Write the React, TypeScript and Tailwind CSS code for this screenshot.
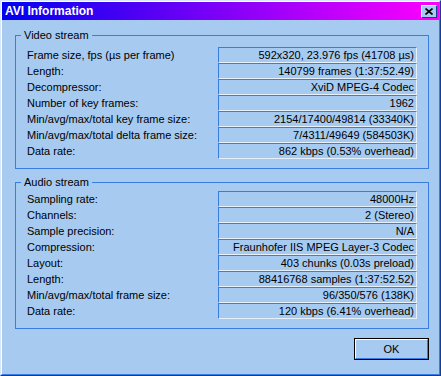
import React from "react";

type Row = [string, string];

const video: Row[] = [
  ["Frame size, fps (µs per frame)", "592x320, 23.976 fps (41708 µs)"],
  ["Length:", "140799 frames (1:37:52.49)"],
  ["Decompressor:", "XviD MPEG-4 Codec"],
  ["Number of key frames:", "1962"],
  ["Min/avg/max/total key frame size:", "2154/17400/49814 (33340K)"],
  ["Min/avg/max/total delta frame size:", "7/4311/49649 (584503K)"],
  ["Data rate:", "862 kbps (0.53% overhead)"],
];

const audio: Row[] = [
  ["Sampling rate:", "48000Hz"],
  ["Channels:", "2 (Stereo)"],
  ["Sample precision:", "N/A"],
  ["Compression:", "Fraunhofer IIS MPEG Layer-3 Codec"],
  ["Layout:", "403 chunks (0.03s preload)"],
  ["Length:", "88416768 samples (1:37:52.52)"],
  ["Min/avg/max/total frame size:", "96/350/576 (138K)"],
  ["Data rate:", "120 kbps (6.41% overhead)"],
];

function Group({ title, rows, top }: { title: string; rows: Row[]; top: string }) {
  return (
    <fieldset className="border border-[#3a7de0] m-0 p-0 min-w-0">
      <legend className="ml-[5px] px-[3px] h-[14px] leading-[14px]">{title}</legend>
      <div className={`flex flex-col pl-[11px] pr-[11px] pb-[9px] ${top}`}>
        {rows.map(([k, v], i) => (
          <div key={i} className="flex h-[16px] items-stretch">
            <div className="flex-1 leading-[16px] whitespace-nowrap">{k}</div>
            <div className="w-[199px] border-t border-l border-t-[#3a7de0] border-l-[#3a7de0] border-b border-r border-b-[#e6f0fb] border-r-[#e6f0fb] text-right pr-[2px] leading-[14px] whitespace-nowrap">
              {v}
            </div>
          </div>
        ))}
      </div>
    </fieldset>
  );
}

export default function App() {
  return (
    <div
      className="w-[441px] h-[376px] bg-[#a6caf0] text-black text-[11px] border border-t-[#d8e8fa] border-l-[#d8e8fa] border-r-[#12408e] border-b-[#12408e]"
      style={{ fontFamily: '"Liberation Sans", Arial, sans-serif' }}
    >
      <div className="h-full flex flex-col border border-t-white border-l-white border-r-[#3a7de0] border-b-[#3a7de0]">
        <div className="h-[18px] flex items-center justify-between bg-linear-to-r/srgb from-[#0000f0] to-[#ff00ff] pl-[3px] pr-[2px]">
          <span className="text-white font-bold text-[12px] leading-[18px]">AVI Information</span>
          <div className="w-[16px] h-[13px] bg-[#a6caf0] border border-t-white border-l-white border-r-[#12408e] border-b-[#12408e] flex items-center justify-center">
            <svg width="8" height="7" viewBox="0 0 8 7">
              <path d="M0.5 0.5 L7.5 6.5 M7.5 0.5 L0.5 6.5" stroke="black" strokeWidth="1.6" />
            </svg>
          </div>
        </div>
        <div className="flex flex-col pl-[13px] pr-[10px] pt-[8px]">
          <Group title="Video stream" rows={video} top="pt-[5px]" />
          <div className="h-[6px]" />
          <Group title="Audio stream" rows={audio} top="pt-[2px]" />
          <div className="flex justify-end mt-[9px]">
            <button className="w-[75px] h-[22px] border border-black bg-[#a6caf0] p-0">
              <div className="w-full h-full border border-t-white border-l-white border-r-[#3a7de0] border-b-[#3a7de0] flex items-center justify-center text-[11px]">
                OK
              </div>
            </button>
          </div>
        </div>
      </div>
    </div>
  );
}
